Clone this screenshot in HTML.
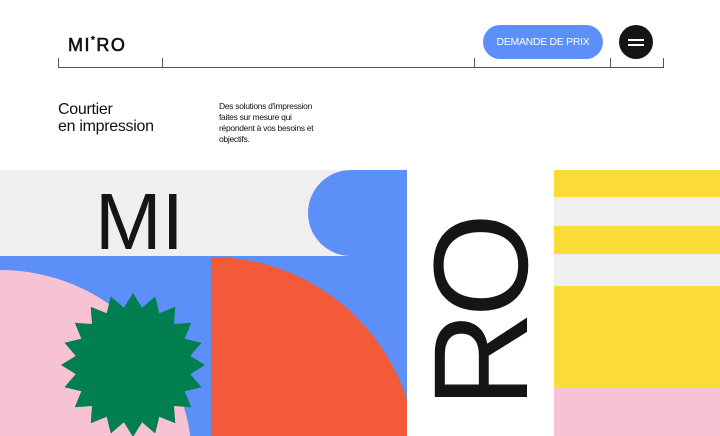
<!DOCTYPE html>
<html><head><style>
*{margin:0;padding:0;box-sizing:border-box}
html,body{width:720px;height:436px;overflow:hidden}
body{background:#fff;font-family:"Liberation Sans",sans-serif;position:relative}
.a{position:absolute}
</style></head><body>
<div class="a" style="left:68px;top:35px;font-size:18px;letter-spacing:1.5px;color:#111;-webkit-text-stroke:0.6px #111">MI<span style="font-size:10px;vertical-align:8px">*</span>RO</div>
<div class="a" style="left:58px;top:67px;width:606px;height:1px;background:#555"></div>
<div class="a" style="left:58px;top:58px;width:1px;height:10px;background:#555"></div>
<div class="a" style="left:162px;top:58px;width:1px;height:10px;background:#555"></div>
<div class="a" style="left:474px;top:58px;width:1px;height:10px;background:#555"></div>
<div class="a" style="left:610px;top:58px;width:1px;height:10px;background:#555"></div>
<div class="a" style="left:663px;top:58px;width:1px;height:10px;background:#555"></div>
<div class="a" style="left:483px;top:25px;width:120px;height:34px;border-radius:17px;background:#5c8ff8;color:#fff;font-size:10.5px;line-height:34px;text-align:center;letter-spacing:-0.3px">DEMANDE DE PRIX</div>
<div class="a" style="left:619px;top:25px;width:34px;height:34px;border-radius:50%;background:#151515"></div>
<div class="a" style="left:628px;top:39px;width:16px;height:2px;background:#fff"></div>
<div class="a" style="left:628px;top:44px;width:16px;height:2px;background:#fff"></div>
<div class="a" style="left:58px;top:101px;font-size:16px;line-height:17px;color:#111;letter-spacing:-0.3px">Courtier<br>en impression</div>
<div class="a" style="left:219px;top:101px;font-size:8.5px;line-height:11px;color:#111;letter-spacing:-0.3px">Des solutions d'impression<br>faites sur mesure qui<br>répondent à vos besoins et<br>objectifs.</div>
<svg class="a" style="left:0;top:170px" width="720" height="266">
<rect x="0" y="0" width="407" height="266" fill="#5c8ff8"/>
<rect x="0" y="0" width="350" height="86" fill="#efefef"/>
<circle cx="351" cy="43" r="43" fill="#5c8ff8"/>
<rect x="351" y="0" width="56" height="86" fill="#5c8ff8"/>
<circle cx="0" cy="292" r="192" fill="#f8c2d5"/>
<clipPath id="c"><rect x="211" y="87" width="196" height="179"/></clipPath>
<circle cx="211" cy="293" r="206" fill="#f25a38" clip-path="url(#c)"/>
<polygon id="s" fill="#027f50" points=""/>
<rect x="554" y="0" width="166" height="27" fill="#fbdb37"/>
<rect x="554" y="27" width="166" height="29" fill="#efefef"/>
<rect x="554" y="56" width="166" height="28" fill="#fbdb37"/>
<rect x="554" y="84" width="166" height="32" fill="#efefef"/>
<rect x="554" y="116" width="166" height="101" fill="#fbdb37"/>
<rect x="554" y="217" width="166" height="49" fill="#f8c2d5"/>
</svg>
<div class="a" style="left:95px;top:177px;font-size:80px;line-height:90px;color:#151515">MI</div>
<div class="a" style="left:432px;top:408px;transform-origin:0 0;transform:rotate(-90deg);font-size:134px;line-height:100px;letter-spacing:-6px;color:#151515;white-space:nowrap">RO</div>
<script>
var p=[],n=20,cx=133,cy=195;
for(var i=0;i<2*n;i++){var r=i%2?58:72,a=Math.PI*i/n-Math.PI/2;p.push((cx+r*Math.cos(a)).toFixed(1)+","+(cy+r*Math.sin(a)).toFixed(1));}
document.getElementById("s").setAttribute("points",p.join(" "));
</script>
</body></html>
